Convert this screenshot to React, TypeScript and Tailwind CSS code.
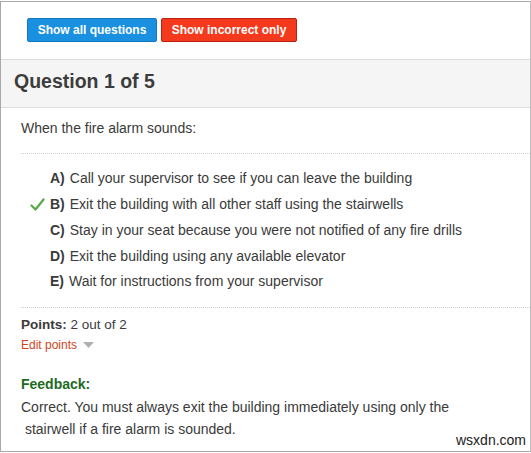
import React from 'react';

const options = [
  { letter: 'A)', text: 'Call your supervisor to see if you can leave the building', correct: false },
  { letter: 'B)', text: 'Exit the building with all other staff using the stairwells', correct: true },
  { letter: 'C)', text: 'Stay in your seat because you were not notified of any fire drills', correct: false },
  { letter: 'D)', text: 'Exit the building using any available elevator', correct: false },
  { letter: 'E)', text: 'Wait for instructions from your supervisor', correct: false },
];

const CheckMark = () => (
  <svg width="15" height="14" viewBox="0 0 15 14" className="block">
    <path d="M1.5 7.5 L5.5 11.5 L13.5 1.5" fill="none" stroke="#5aaa4a" strokeWidth="2.3" strokeLinecap="round" strokeLinejoin="round" />
  </svg>
);

const App: React.FC = () => {
  return (
    <div className="relative w-[531px] h-[453px] bg-white font-['Liberation_Sans',Arial,sans-serif] text-[#3a3a3a]">
      <div className="mt-[1px] w-[531px] h-[451px] border border-[#a9a9a9] border-r-[#bdbdbd] flex flex-col">
        {/* buttons */}
        <div className="flex gap-[4px] pl-[26px] pt-[16px]">
          <button className="w-[130px] h-[24px] bg-[#1a90e0] border border-[#1278c0] rounded-[2px] text-white font-bold text-[12px]">
            Show all questions
          </button>
          <button className="w-[136px] h-[24px] bg-[#f4391c] border border-[#b8220e] rounded-[2px] text-white font-bold text-[12px]">
            Show incorrect only
          </button>
        </div>

        {/* header */}
        <div className="mt-[17px] h-[49px] bg-[#f5f5f5] border-y border-[#dcdcdc] flex items-center pl-[13px] pb-[3px]">
          <h2 className="text-[19.5px] font-bold text-[#3c3c3c] leading-none">Question 1 of 5</h2>
        </div>

        <div className="pl-[20px]">
          <p className="pt-[10px] text-[14px] leading-[20px]">When the fire alarm sounds:</p>
          <div className="mt-[15px] border-t border-dotted border-[#cfcfcf]" />

          <ul className="pt-[12px] pb-[12px]">
            {options.map(o => (
              <li key={o.letter} className="flex items-center h-[25.75px] text-[14px]">
                <span className="w-[29px] flex justify-start pl-[9px]">{o.correct && <CheckMark />}</span>
                <span className="font-bold mr-[5px]">{o.letter}</span>
                <span>{o.text}</span>
              </li>
            ))}
          </ul>
          <div className="border-t border-dotted border-[#cfcfcf]" />

          <div className="pt-[8px] text-[13.5px] leading-[18px]">
            <span className="font-bold">Points:</span> 2 out of 2
          </div>
          <div className="flex items-center gap-[6px] mt-[2px] text-[12px] leading-[18px] text-[#d0441c]">
            <span>Edit points</span>
            <svg width="11" height="6" viewBox="0 0 11 6"><path d="M0 0 L11 0 L5.5 6 Z" fill="#b0b0b0" /></svg>
          </div>

          <div className="mt-[20px] text-[14px] font-bold text-[#1e6b1e] leading-[20px]">Feedback:</div>
          <p className="mt-[2px] text-[14px] leading-[22px]">
            Correct. You must always exit the building immediately using only the
            <br />
            &nbsp;stairwell if a fire alarm is sounded.
          </p>
        </div>
      </div>
      <span className="absolute left-[456px] top-[432px] text-[14px] text-[#222] leading-none">wsxdn.com</span>
    </div>
  );
};

export default App;
